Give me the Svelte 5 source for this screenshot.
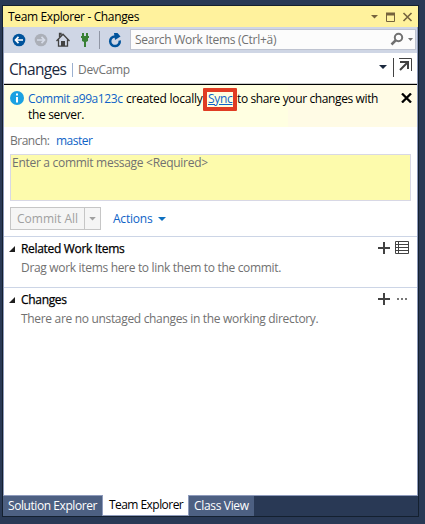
<script>
  const tabs = [
    { label: 'Solution Explorer', width: 100, spacing: -0.43, active: false },
    { label: 'Team Explorer', width: 86, spacing: -0.55, active: true },
    { label: 'Class View', width: 65, spacing: -0.33, active: false }
  ];
</script>

<main class="desktop">
  <div class="window">
    <header class="title">
      <span class="title-text">Team Explorer - Changes</span>
      <svg width="44" height="20" viewBox="0 0 44 20" fill="none" stroke="#75633d">
        <path d="M1 8h7L4.5 11.5z" fill="#75633d" stroke="none" />
        <path d="M16.5 6v8.500h8v-8.500" /><path d="M16 7h9" stroke-width="3" />
        <path d="M33.500 6l8 8M41.500 6l-8 8" stroke-width="1.600" />
      </svg>
    </header>

    <div class="body">
      <div class="toolbar">
        <svg width="124" height="26" viewBox="0 0 124 26">
          <circle cx="15" cy="13" r="6.300" fill="#00539c" />
          <path d="M19 13h-7M14.500 9.800L11.500 13l3 3.200" fill="none" stroke="#fff" stroke-width="1.700" />
          <circle cx="37" cy="13" r="6.300" fill="#abafb8" />
          <path d="M33 13h7M37.500 9.800l3 3.200-3 3.200" fill="none" stroke="#d5dbe8" stroke-width="1.700" />
          <path d="M52.500 14L59 7.300l6.500 6.700M54.500 12.500v6.700h9v-6.700M55.500 10V6.500h1.500v2" fill="none" stroke="#424242" stroke-width="1.300" />
          <path d="M57 14h4v5h-4z" fill="#424242" />
          <path d="M78 6h2v3h2V6h2v3h1v2h-1v3l-2 1v5h-2v-5l-2-1v-3h-1V9h1z" fill="#388034" />
          <path d="M95.500 4v18" stroke="#9096a5" />
          <path d="M111 9.500a4.800 4.800 0 1 0 4.700 4" fill="none" stroke="#00539c" stroke-width="2.500" />
          <path d="M110 6h3.500l3 3.500-5.500 3.500z" fill="#00539c" />
        </svg>
        <div class="search">
          <span>Search Work Items (Ctrl+ä)</span>
          <svg width="25" height="18" viewBox="0 0 25 18">
            <circle cx="8.500" cy="6.500" r="3.700" fill="none" stroke="#717171" stroke-width="2" />
            <path d="M6 9L1.500 13.500" stroke="#717171" stroke-width="2.500" />
            <path d="M18 7h5l-2.500 3z" fill="#717171" />
          </svg>
        </div>
      </div>

      <div class="heading">
        <span class="page">Changes</span>
        <i></i>
        <span class="project">DevCamp</span>
        <svg width="36" height="24" viewBox="0 0 36 24">
          <path d="M1 9h8l-4 4z" fill="#1b293e" />
          <path d="M15.500 2v19" stroke="#424242" />
          <path d="M21 2.500h12.500V15" fill="none" stroke="#424242" />
          <path d="M22 6h8v7M29.500 6.500L22 14" fill="none" stroke="#424242" stroke-width="2" />
        </svg>
      </div>

      <div class="notice">
        <svg class="info" width="14" height="14" viewBox="0 0 14 14">
          <circle cx="7" cy="7" r="7" fill="#1ba1e2" />
          <path d="M6 2.500h2v2H6zM6 6h2v5.500H6z" fill="#fff" />
        </svg>
        <div class="message">
          <div class="line">
            <span class="commit">Commit a99a123c</span>
            <span class="created">created locally.</span>
            <span class="sync">Sync</span>
            <span class="share">to share your changes with</span>
          </div>
          <div class="server">the server.</div>
        </div>
        <svg class="dismiss" width="11" height="10" viewBox="0 0 11 10"><path d="M1 .5l9 9M10 .5l-9 9" stroke="#000" stroke-width="2.300" /></svg>
      </div>

      <div class="branch"><span class="branch-label">Branch:</span><span class="master">master</span></div>
      <div class="commit-box"><span>Enter a commit message &lt;Required&gt;</span></div>

      <div class="actions">
        <div class="button">
          <span>Commit All</span>
          <svg width="16" height="21" viewBox="0 0 16 21"><path d="M4.500 9h7L8 12.500z" fill="#a0a0a0" /></svg>
        </div>
        <span class="action-link">Actions</span>
        <svg width="8" height="4" viewBox="0 0 8 4"><path d="M0 0h8L4 4z" fill="#0e70c0" /></svg>
      </div>

      <section class="section">
        <div class="section-head">
          <svg width="6" height="6" viewBox="0 0 6 6"><path d="M6 0v6H0z" fill="#1e1e1e" /></svg>
          <b>Related Work Items</b>
          <svg class="tools" width="32" height="14" viewBox="0 0 32 14">
            <path d="M0 7h12M6 1v12" stroke="#424242" stroke-width="2" />
            <path d="M17.500 .5h13v12h-13zM17.500 3.500h13M17.500 6.500h13M17.500 9.500h13M20.500 .5v12" fill="none" stroke="#424242" />
          </svg>
        </div>
        <p>Drag work items here to link them to the commit.</p>
      </section>

      <section class="section last">
        <div class="section-head">
          <svg width="6" height="6" viewBox="0 0 6 6"><path d="M6 0v6H0z" fill="#1e1e1e" /></svg>
          <b>Changes</b>
          <svg class="tools" width="32" height="14" viewBox="0 0 32 14">
            <path d="M0 7h12M6 1v12" stroke="#424242" stroke-width="2" />
            <path d="M19 6h2v2h-2zM23 6h2v2h-2zM27 6h2v2h-2z" fill="#777" />
          </svg>
        </div>
        <p>There are no unstaged changes in the working directory.</p>
      </section>
    </div>

    <nav class="tabs">
      {#each tabs as tab}
        <div class="tab" class:active={tab.active} style="width: {tab.width}px; letter-spacing: {tab.spacing}px"><span>{tab.label}</span></div>
      {/each}
    </nav>
  </div>
</main>

<style>
  :global(body) { margin: 0; }
  * { box-sizing: border-box; }
  .desktop {
    width: 425px; height: 524px; padding: 5px 6px 7px 2px; background: #293955;
    font: 12px/16px "Open Sans", "Noto Sans", sans-serif; letter-spacing: -0.32px; white-space: nowrap; overflow: hidden;
  }
  svg { display: block; flex: none; }
  .window { height: 512px; border: 1px solid #14202f; display: flex; flex-direction: column; background: #fff; }
  .title { height: 21px; flex: none; background: #fff29d; display: flex; align-items: center; justify-content: space-between; padding: 0 4px 0 5px; color: #000; }
  .title-text { padding-top: 1px; letter-spacing: -0.36px; }
  .body { flex: 1; min-height: 0; display: flex; flex-direction: column; border: solid #8e9bbc; border-width: 0 1px; }
  .toolbar { height: 26px; flex: none; background: #cfd6e5; display: flex; align-items: flex-start; }
  .toolbar > svg { margin-right: 2px; }
  .search { width: 286px; height: 21px; margin-top: 2px; border: 1px solid #bec3d0; background: #fcfcfc; display: flex; align-items: center; justify-content: space-between; padding-left: 4px; color: #717171; letter-spacing: -0.28px; }
  .heading { height: 31px; flex: none; border-bottom: 1px solid #ccc; display: flex; align-items: center; padding: 0 3px 0 5px; }
  .page { width: 59px; font-size: 15.5px; color: #1b293e; letter-spacing: -0.65px; padding-top: 1px; }
  .heading i { width: 1px; height: 14px; background: #9bb0d0; margin: 3px 5px 0 4px; }
  .project { color: #717171; padding-top: 3px; }
  .heading svg { margin-left: auto; }
  .notice { height: 43px; flex: none; border-top: 1px solid #000; background: linear-gradient(90deg, #ffffe1 284px, #fffbe5 284px); display: flex; padding: 6px 5px 0 6px; }
  .info { margin-top: 0; }
  .message { padding-left: 4px; }
  .line { display: flex; align-items: center; height: 16px; }
  .commit { color: #0e63c7; width: 98px; letter-spacing: -0.42px; }
  .created { width: 77px; letter-spacing: -0.25px; }
  .sync { color: #0e63c7; text-decoration: underline; border: 4px solid #e03c23; width: 34px; height: 23px; line-height: 13px; padding-left: 1px; border-radius: 1px; flex: none; }
  .share { letter-spacing: -0.38px; }
  .dismiss { margin: 2px 0 0 auto; }
  .branch { height: 27px; flex: none; display: flex; align-items: center; padding: 1px 0 0 6px; letter-spacing: -0.5px; }
  .branch-label { width: 46px; color: #717171; }
  .master { color: #0e63c7; }
  .commit-box { height: 47px; flex: none; margin: 0 6px; border: 1px solid #d8d8e5; background: #fdfbac; padding-left: 1px; color: #717171; letter-spacing: -0.29px; }
  .actions { height: 36px; flex: none; display: flex; align-items: center; padding: 0 0 0 6px; border-bottom: 1px solid #ccd5e6; letter-spacing: -0.22px; }
  .button { width: 91px; height: 23px; border: 1px solid #c6c6c6; background: #f5f5f5; display: flex; align-items: center; color: #a0a0a0; letter-spacing: 0; }
  .button span { width: 73px; padding-left: 6px; }
  .button svg { border-left: 1px solid #c6c6c6; }
  .action-link { color: #0e63c7; width: 45px; margin-left: 12px; }
  .section { height: 51px; flex: none; border-bottom: 1px solid #ccd5e6; padding-top: 3px; }
  .last { border-bottom: 0; flex: 1; }
  .section-head { height: 17px; display: flex; align-items: center; padding: 0 7px 0 5px; }
  .section-head b { font-weight: 400; margin-left: 6px; -webkit-text-stroke: .25px #000; }
  .tools { margin: -2px 0 0 auto; }
  p { margin: 3px 0 0 17px; color: #717171; }
  .tabs { height: 21px; flex: none; background: #293955; border-top: 1px solid #8e9bbc; display: flex; }
  .tab { height: 20px; background: #4d6082; color: #fff; padding: 2px 0 0 5px; border-right: 1px solid #8e9bbc; }
  .tab.active { height: 21px; background: #fff; color: #000; margin-top: -1px; padding: 2px 0 0 6px; border-bottom: 1px solid #8e9bbc; }
  .tab:last-child { border-right: 0; }
</style>
